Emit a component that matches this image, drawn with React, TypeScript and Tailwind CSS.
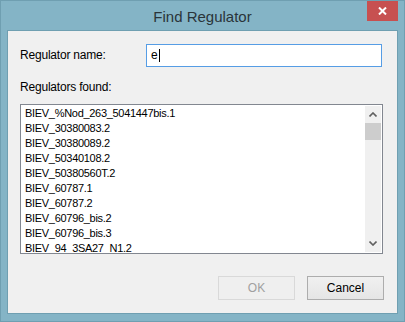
import React from "react";

const items = [
  "BIEV_%Nod_263_5041447bis.1",
  "BIEV_30380083.2",
  "BIEV_30380089.2",
  "BIEV_50340108.2",
  "BIEV_50380560T.2",
  "BIEV_60787.1",
  "BIEV_60787.2",
  "BIEV_60796_bis.2",
  "BIEV_60796_bis.3",
  "BIEV_94_3SA27_N1.2",
];

export default function App() {
  return (
    <div className="w-[405px] h-[322px] bg-[#84b4c6] border border-[#6f9fb1] flex flex-col font-['Liberation_Sans',Arial,sans-serif] text-black">
      <div className="relative h-[29px] flex items-center justify-center shrink-0">
        <span className="text-[15px] leading-none text-[#2a343a] mt-[1px]">Find Regulator</span>
        <div className="absolute right-[6px] top-0 w-[31px] h-[20px] bg-[#c75050] flex items-center justify-center">
          <svg width="9" height="8" viewBox="0 0 9 8">
            <path d="M1 0.5 L8 7.5 M8 0.5 L1 7.5" stroke="white" strokeWidth="2" />
          </svg>
        </div>
      </div>
      <div className="mx-[6px] mb-[7px] flex-1 border border-[#6f9fb1] bg-[#f0f0f0] flex flex-col">
        <div className="flex items-center pl-[12px] mt-[13px]">
          <span className="w-[126px] text-[12px] leading-[15px] tracking-[-0.2px]">Regulator name:</span>
          <div className="w-[236px] h-[23px] border border-[#569de5] bg-white flex items-center pl-[4px]">
            <span className="text-[12px] leading-[15px]">e</span>
            <span className="w-[1px] h-[13px] bg-black ml-[1px]" />
          </div>
        </div>
        <div className="pl-[12px] mt-[13px] text-[12px] leading-[15px] tracking-[-0.2px]">Regulators found:</div>
        <div className="ml-[12px] mt-[9px] w-[363px] h-[150px] border border-[#828790] bg-white p-[1px] flex">
          <div className="flex-1 overflow-hidden pl-[3px]">
            {items.map((t) => (
              <div key={t} className="text-[11px] leading-[15px] tracking-[-0.3px] whitespace-nowrap">
                {t}
              </div>
            ))}
          </div>
          <div className="w-[16px] bg-[#f0f0f0] flex flex-col">
            <div className="h-[17px] flex items-center justify-center">
              <svg width="8" height="5" viewBox="0 0 8 5">
                <path d="M0.5 4.5 L4 1 L7.5 4.5" stroke="#606060" strokeWidth="1.6" fill="none" />
              </svg>
            </div>
            <div className="h-[17px] bg-[#cdcdcd]" />
            <div className="flex-1" />
            <div className="h-[17px] flex items-center justify-center">
              <svg width="8" height="5" viewBox="0 0 8 5">
                <path d="M0.5 0.5 L4 4 L7.5 0.5" stroke="#606060" strokeWidth="1.6" fill="none" />
              </svg>
            </div>
          </div>
        </div>
        <div className="flex justify-end gap-[12px] pr-[13px] mt-[22px]">
          <div className="w-[77px] h-[24px] border border-[#d9d9d9] bg-[#efefef] flex items-center justify-center text-[12px] text-[#a0a0a0]">
            OK
          </div>
          <div className="w-[77px] h-[24px] border border-[#adadad] bg-gradient-to-b from-[#f0f0f0] to-[#e5e5e5] flex items-center justify-center text-[12px]">
            Cancel
          </div>
        </div>
      </div>
    </div>
  );
}
